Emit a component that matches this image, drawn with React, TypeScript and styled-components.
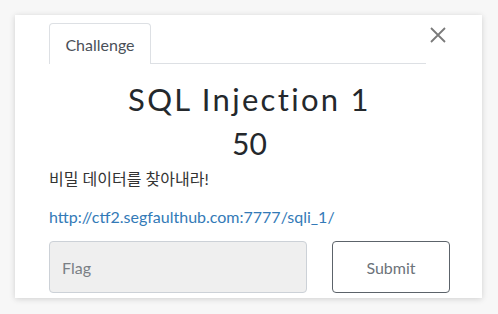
import React from "react";
import styled, { createGlobalStyle } from "styled-components";

const Global = createGlobalStyle`
  body {
    margin: 0;
    background: #f7f7f7;
    font-family: Lato, "Noto Sans CJK KR", sans-serif;
  }
`;

const Page = styled.div`
  padding: 15px 16px 16px 15px;
`;

const Modal = styled.div`
  height: 283px;
  background: #fff;
  box-shadow: 0 1px 6px rgba(0, 0, 0, 0.16);
  padding: 8px 32px 0 34px;
  box-sizing: border-box;
  overflow: hidden;
  display: flex;
  flex-direction: column;
`;

const Header = styled.div`
  display: flex;
  align-items: flex-start;
`;

const TabList = styled.div`
  width: 377px;
  display: flex;
  border-bottom: 1px solid #dde0e4;
`;

const Tab = styled.div`
  width: 102px;
  height: 41px;
  box-sizing: border-box;
  border: 1px solid #dde0e4;
  border-bottom: none;
  border-radius: 4px 4px 0 0;
  margin-bottom: -1px;
  background: #fff;
  font-size: 16px;
  color: #4a5058;
  display: flex;
  align-items: center;
  justify-content: center;
`;

const Close = styled.button`
  margin-left: 4px;
  margin-top: 4px;
  width: 16px;
  height: 16px;
  padding: 0;
  border: none;
  background: none;
  display: flex;
`;

const Title = styled.h1`
  margin: 17px 0 0;
  font-size: 31px;
  font-weight: 400;
  letter-spacing: 2.3px;
  line-height: 1.2;
  color: #24282c;
  text-align: center;
`;

const Points = styled.div`
  margin-top: 7px;
  font-size: 30px;
  line-height: 1.2;
  color: #24282c;
  text-align: center;
`;

const Text = styled.p`
  margin: 7px 0 0;
  font-size: 16px;
  line-height: 22px;
  color: #333;
`;

const Link = styled.a`
  display: block;
  margin-top: 16px;
  font-size: 16px;
  line-height: 22px;
  color: #337ab7;
  text-decoration: none;
`;

const Form = styled.div`
  margin-top: 13px;
  display: flex;
  gap: 25px;
`;

const Input = styled.input`
  width: 258px;
  height: 52px;
  box-sizing: border-box;
  border: 1px solid #ccd1d7;
  border-radius: 4px;
  background: #efefef;
  padding: 0 12px;
  font-family: Lato, sans-serif;
  font-size: 16px;
  outline: none;
  &::placeholder {
    color: #7a7f85;
  }
`;

const Button = styled.button`
  width: 118px;
  height: 52px;
  box-sizing: border-box;
  border: 1px solid #5c636a;
  border-radius: 4px;
  background: #fff;
  font-family: Lato, sans-serif;
  font-size: 16px;
  color: #6c737a;
`;

export default function App() {
  return (
    <Page>
      <Global />
      <Modal>
        <Header>
          <TabList>
            <Tab>Challenge</Tab>
          </TabList>
          <Close aria-label="close">
            <svg width="16" height="16" viewBox="0 0 16 16">
              <path d="M1 1L15 15M15 1L1 15" stroke="#7a7a7a" strokeWidth="1.8" />
            </svg>
          </Close>
        </Header>
        <Title>SQL Injection 1</Title>
        <Points>50</Points>
        <Text>비밀 데이터를 찾아내라!</Text>
        <Link href="#">http://ctf2.segfaulthub.com:7777/sqli_1/</Link>
        <Form>
          <Input placeholder="Flag" />
          <Button>Submit</Button>
        </Form>
      </Modal>
    </Page>
  );
}
